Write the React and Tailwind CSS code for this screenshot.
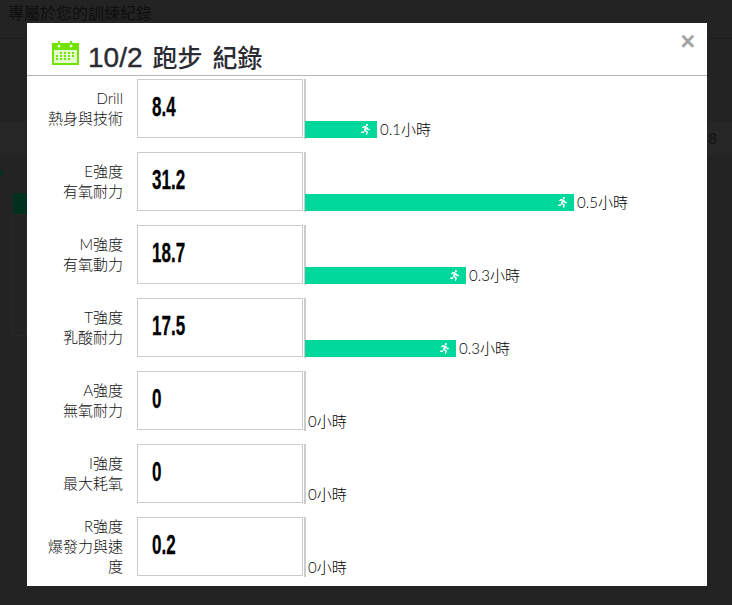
import { FaRunning } from 'react-icons/fa';

const rows = [
  { name: ['Drill', '熱身與技術'], value: '8.4', width: 'w-[72px]', hours: '0.1小時' },
  { name: ['E強度', '有氧耐力'], value: '31.2', width: 'w-[269px]', hours: '0.5小時' },
  { name: ['M強度', '有氧動力'], value: '18.7', width: 'w-[161px]', hours: '0.3小時' },
  { name: ['T強度', '乳酸耐力'], value: '17.5', width: 'w-[151px]', hours: '0.3小時' },
  { name: ['A強度', '無氧耐力'], value: '0', hours: '0小時' },
  { name: ['I強度', '最大耗氧'], value: '0', hours: '0小時' },
  { name: ['R強度', '爆發力與速度'], value: '0.2', hours: '0小時' },
];

const CalendarIcon = () => (
  <svg width="27" height="24" viewBox="0 0 27 24" className="mb-[8px] shrink-0">
    <rect x="0" y="2" width="27" height="22" fill="#70e400" />
    <rect x="2" y="9" width="23" height="13" fill="#e4f9cc" />
    <rect x="6" y="0" width="2" height="5" fill="#70e400" />
    <rect x="18" y="0" width="2" height="5" fill="#70e400" />
    <circle cx="7" cy="5" r="1.5" fill="#e4f9cc" />
    <circle cx="19" cy="5" r="1.5" fill="#e4f9cc" />
    <g fill="#70e400">
      <rect x="8" y="11" width="2" height="2" />
      <rect x="12" y="11" width="2" height="2" />
      <rect x="16" y="11" width="2" height="2" />
      <rect x="20" y="11" width="2" height="2" />
      <rect x="4" y="14" width="2" height="2" />
      <rect x="8" y="14" width="2" height="2" />
      <rect x="12" y="14" width="2" height="2" />
      <rect x="16" y="14" width="2" height="2" />
      <rect x="20" y="14" width="2" height="2" />
      <rect x="4" y="17" width="2" height="2" />
      <rect x="8" y="17" width="2" height="2" />
      <rect x="12" y="17" width="2" height="2" />
      <rect x="16" y="17" width="2" height="2" />
    </g>
  </svg>
);

const Row = ({ row }) => (
  <div className="flex h-[59px] items-stretch">
    <div className="flex w-[96px] flex-col justify-center pb-[2px] pl-[20px] text-right text-[15px] font-light leading-[20px] text-[#111]">
      <div>{row.name[0]}</div>
      <div>{row.name[1]}</div>
    </div>
    <div className="ml-[14px] flex w-[166px] items-center border border-[#ccc] pl-[14px]">
      <span className="origin-left -translate-y-[1px] scale-x-[0.63] font-['Liberation_Sans_Narrow','Liberation_Sans',sans-serif] text-[27px] font-bold text-black [-webkit-text-stroke:0.3px_black]">
        {row.value}
      </span>
    </div>
    <div className="-mb-[1px] ml-[1px] flex flex-1 items-end border-l-2 border-[#ccc] pb-[1px]">
      {row.width && (
        <div className={`${row.width} relative -ml-[1px] mr-[1px] flex h-[17px] items-center justify-end bg-[#00d89b] pr-[6px]`}>
          <FaRunning className="text-[11px] text-white" />
        </div>
      )}
      <span className="ml-[2px] text-[15px] font-light leading-[17px] text-black">{row.hours}</span>
    </div>
  </div>
);

export default function App() {
  return (
    <div className="relative h-[605px] w-[732px] overflow-hidden bg-[#232323] font-['Lato','Noto_Sans_CJK_TC',sans-serif]">
      <div className="h-[39px] border-b border-[#1c1c1c] pl-[8px] pt-[3px] text-[16px] leading-[20px] text-[#0e0e0e]">
        專屬於您的訓練紀錄
      </div>
      <div className="absolute left-0 top-[122px] h-[33px] w-full bg-[#262626]" />
      <div className="absolute left-[12px] top-[214px] h-[122px] w-[15px] border border-[#282828]" />
      <div className="absolute left-0 top-[171px] h-[4px] w-[3px] bg-[#02301f]" />
      <div className="absolute left-[13px] top-[193px] h-[21px] w-[14px] bg-[#02301f]" />
      <div className="absolute left-[708px] top-[128px] text-[16px] font-bold leading-[20px] text-[#161616]">8</div>

      <div className="absolute left-[27px] top-[23px] h-[563px] w-[680px] overflow-hidden bg-white">
        <div className="flex h-[53px] items-center gap-[9px] border-b border-[#b5b5b5] pl-[25px] pt-[16px]">
          <CalendarIcon />
          <h1 className="flex items-baseline gap-[10px] font-['Noto_Sans_CJK_TC',sans-serif] text-[25px] font-medium leading-[32px] text-[#2b2b33]">
            <span className="font-['Liberation_Sans',sans-serif] text-[28px] [-webkit-text-stroke:0.4px_#2b2b33]">10/2</span>
            <span>跑步</span>
            <span>紀錄</span>
          </h1>
        </div>
        <span className="absolute right-[12px] top-[3px] font-['Liberation_Sans',sans-serif] text-[25px] font-bold leading-[30px] text-[#a3a3a3]">
          ×
        </span>
        <div className="flex flex-col gap-[14px] pt-[3px]">
          {rows.map((row) => (
            <Row key={row.name[0]} row={row} />
          ))}
        </div>
      </div>
    </div>
  );
}
